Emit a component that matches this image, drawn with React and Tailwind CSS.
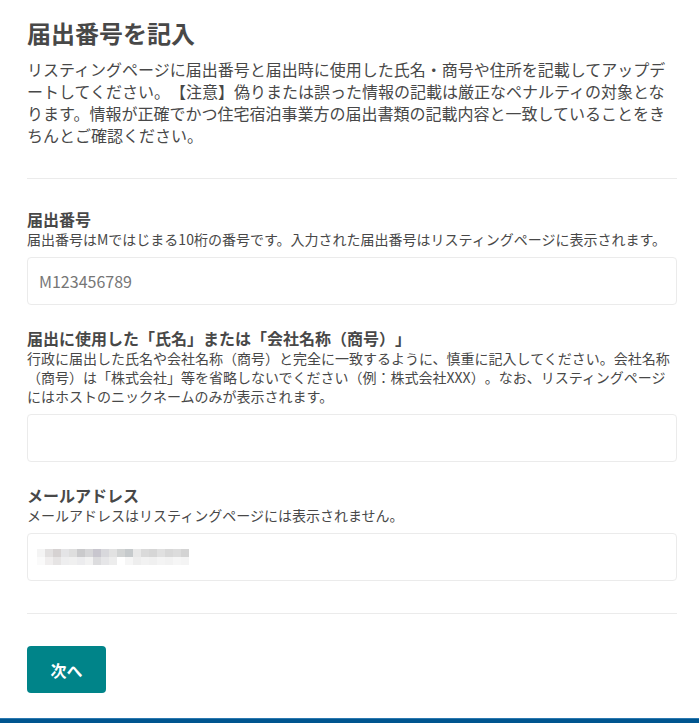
import React from 'react';

// pixelated (blurred) email value, two rows of blocks
const topRow = [
  'bg-[#f4f4f4]', 'bg-[#e2e0e0]', 'bg-[#d6d2d2]', 'bg-[#e4e4e6]', 'bg-[#dedede]',
  'bg-[#cacacc]', 'bg-[#d6d6d8]', 'bg-[#c8c6ce]', 'bg-[#d8d8dc]', 'bg-[#e2e2e2]',
  'bg-[#d2d4d4]', 'bg-[#c6cacc]', 'bg-[#e8e8e8]', 'bg-[#dadada]', 'bg-[#d6d6d6]',
  'bg-[#e0e0e0]', 'bg-[#d8d8d8]', 'bg-[#dcdcdc]', 'bg-[#d4d4d4]',
];
const bottomRow = [
  'bg-[#fafafa]', 'bg-[#f0eeee]', 'bg-[#e6e4e4]', 'bg-[#eeeeef]', 'bg-[#f0f0f0]',
  'bg-[#ececee]', 'bg-[#f2f2f2]', 'bg-[#dcdcde]', 'bg-[#e6e6e8]', 'bg-[#ededed]',
  'bg-[#ffffff]', 'bg-[#f6f6f6]', 'bg-[#eeeeee]', 'bg-[#f2f2f2]', 'bg-[#f0f0f0]',
  'bg-[#f4f4f4]', 'bg-[#f2f2f2]', 'bg-[#f6f6f6]', 'bg-[#f4f4f4]',
];

const Field = ({ label, help, children, className = '' }) => (
  <div className={className}>
    <div className="text-[16px] leading-[22px] font-bold text-[#484848]">{label}</div>
    <div className="text-[14px] leading-[19px] text-[#484848]">{help}</div>
    <div className="mt-2">{children}</div>
  </div>
);

const inputClass =
  'w-full h-[48px] border border-[#ebebeb] rounded-[4px] px-[11px] text-[16px] text-[#484848] placeholder:text-[#767676] bg-white outline-none';

export default function App() {
  return (
    <div className="min-h-screen bg-white flex flex-col font-['Noto_Sans_CJK_JP','Noto_Sans',sans-serif] [text-spacing-trim:space-all]">
      <div className="flex-1 pl-[27px] pr-[22px] pt-4">
        <h1 className="text-[24px] leading-[34px] font-bold text-[#484848]">届出番号を記入</h1>
        <p className="mt-2 text-[16px] leading-[22px] text-[#484848]">
          リスティングページに届出番号と届出時に使用した氏名・商号や住所を記載してアップデートしてください。【注意】偽りまたは誤った情報の記載は厳正なペナルティの対象となります。情報が正確でかつ住宅宿泊事業方の届出書類の記載内容と一致していることをきちんとご確認ください。
        </p>

        <div className="mt-8 border-t border-[#ebebeb]" />

        <Field
          className="mt-[29px]"
          label="届出番号"
          help="届出番号はMではじまる10桁の番号です。入力された届出番号はリスティングページに表示されます。"
        >
          <input className={inputClass} placeholder="M123456789" />
        </Field>

        <Field
          className="mt-[22px]"
          label="届出に使用した「氏名」または「会社名称（商号）」"
          help="行政に届出した氏名や会社名称（商号）と完全に一致するように、慎重に記入してください。会社名称（商号）は「株式会社」等を省略しないでください（例：株式会社XXX）。なお、リスティングページにはホストのニックネームのみが表示されます。"
        >
          <input className={inputClass} />
        </Field>

        <Field
          className="mt-[22px]"
          label="メールアドレス"
          help="メールアドレスはリスティングページには表示されません。"
        >
          <div className="h-[48px] border border-[#ebebeb] rounded-[4px] px-[9px] flex flex-col justify-center">
            <div className="flex">
              {topRow.map((c, i) => (
                <div key={i} className={`w-[8px] h-[8px] ${c}`} />
              ))}
            </div>
            <div className="flex">
              {bottomRow.map((c, i) => (
                <div key={i} className={`w-[8px] h-[8px] ${c}`} />
              ))}
            </div>
          </div>
        </Field>

        <div className="mt-8 border-t border-[#ebebeb]" />

        <button className="mt-8 w-[79px] h-[47px] rounded-[4px] bg-[#008489] text-white text-[16px] font-bold">
          次へ
        </button>
      </div>
      <div className="h-[5px] bg-[#00558f] border-t border-[#2a78b0]" />
    </div>
  );
}
